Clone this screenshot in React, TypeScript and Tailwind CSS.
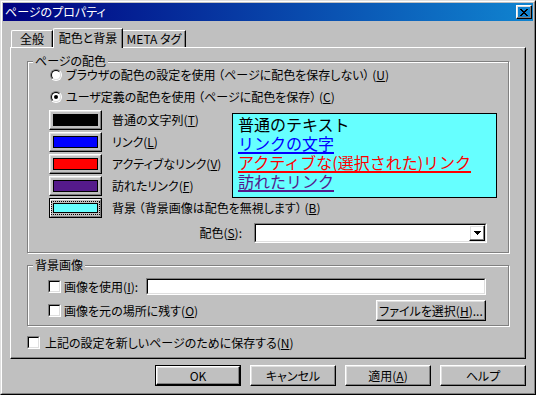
import React from "react";

const FONT = "font-['Noto_Sans_CJK_JP','Noto_Sans_CJK_SC',sans-serif] [font-feature-settings:'palt']";

function Radio({ checked }: { checked?: boolean }) {
  return (
    <div className="w-[12px] h-[12px] shrink-0 rounded-full border border-t-[#808080] border-l-[#808080] border-r-white border-b-white">
      <div className="w-full h-full rounded-full border border-t-black border-l-black border-r-[#dfdfdf] border-b-[#dfdfdf] bg-white flex items-center justify-center">
        {checked && <div className="w-[4px] h-[4px] rounded-full bg-black" />}
      </div>
    </div>
  );
}

function Check() {
  return (
    <div className="w-[13px] h-[13px] shrink-0 border border-t-[#808080] border-l-[#808080] border-r-white border-b-white">
      <div className="w-full h-full border border-t-black border-l-black border-r-[#dfdfdf] border-b-[#dfdfdf] bg-white" />
    </div>
  );
}

function Btn({
  children,
  className = "",
  def,
}: {
  children?: React.ReactNode;
  className?: string;
  def?: boolean;
}) {
  const inner = (
    <div className="h-full w-full border border-t-white border-l-white border-r-black border-b-black shadow-[inset_-1px_-1px_0_#808080,inset_1px_1px_0_#dfdfdf] flex items-center justify-center">
      {children}
    </div>
  );
  if (def) {
    return <div className={"border border-black shrink-0 " + className}>{inner}</div>;
  }
  return <div className={"shrink-0 " + className}>{inner}</div>;
}

function Swatch({ color }: { color: string }) {
  return (
    <Btn className="w-[53px] h-[20px]">
      <div className="w-[45px] h-[12px] border border-black" style={{ background: color }} />
    </Btn>
  );
}

function FocusSwatch({ color }: { color: string }) {
  return (
    <div className="w-[53px] h-[20px] shrink-0 border border-black">
      <div className="h-full w-full border border-t-white border-l-white border-r-[#808080] border-b-[#808080] flex items-center justify-center">
        <div className="border border-dotted border-black p-px">
          <div className="w-[45px] h-[10px] border border-black" style={{ background: color }} />
        </div>
      </div>
    </div>
  );
}

function Sunken({ className = "", children }: { className?: string; children?: React.ReactNode }) {
  return (
    <div
      className={
        "border border-t-[#808080] border-l-[#808080] border-r-white border-b-white bg-white " + className
      }
    >
      <div className="h-full w-full border border-t-black border-l-black border-r-[#dfdfdf] border-b-[#dfdfdf] flex items-center justify-end">
        {children}
      </div>
    </div>
  );
}

function GroupLabel({ children }: { children: React.ReactNode }) {
  return (
    <div className="-mt-[7px] ml-[5px] px-[2px] w-fit h-[12px] leading-[12px] bg-[#c0c0c0] whitespace-nowrap">
      {children}
    </div>
  );
}

function U({ children }: { children: React.ReactNode }) {
  return <span className="underline underline-offset-[1px]">{children}</span>;
}

export default function App() {
  return (
    <div
      className={`w-[536px] h-[395px] bg-[#c0c0c0] ${FONT} text-[12px] leading-[12px] text-black border border-t-[#dfdfdf] border-l-[#dfdfdf] border-r-black border-b-black overflow-hidden`}
    >
      <div className="h-full border border-t-white border-l-white border-r-[#808080] border-b-[#808080] p-px flex flex-col">
        {/* Title bar */}
        <div className="h-[18px] shrink-0 flex items-center bg-[linear-gradient(to_right,#000080,#1084d0)] pl-[2px] pr-[1px]">
          <span className="text-white flex-1 whitespace-nowrap">ページのプロパティ</span>
          <Btn className="w-[16px] h-[14px]">
            <svg width="8" height="7" viewBox="0 0 8 7" shapeRendering="crispEdges">
              <path
                d="M0 0h2v1H0zM6 0h2v1H6zM1 1h2v1H1zM5 1h2v1H5zM2 2h4v1H2zM3 3h2v1H3zM2 4h4v1H2zM1 5h2v1H1zM5 5h2v1H5zM0 6h2v1H0zM6 6h2v1H6z"
                fill="#000"
              />
            </svg>
          </Btn>
        </div>

        <div className="px-[7px] pt-[7px] flex flex-col">
          {/* Tabs */}
          <div className="h-[19px] flex items-end pl-[1px]">
            <div className="w-[42px] h-[17px] border-t border-l border-r border-t-white border-l-white border-r-black shadow-[inset_-1px_0_0_#808080] rounded-tl-[2px] flex items-center justify-center">
              全般
            </div>
            <div className="relative z-10 w-[70px] h-[20px] -mb-px bg-[#c0c0c0] border-t border-l border-r border-t-white border-l-white border-r-black shadow-[inset_-1px_0_0_#808080] rounded-tl-[2px] flex items-center justify-center pb-[2px] whitespace-nowrap">
              配色と背景
            </div>
            <div className="w-[63px] h-[17px] border-t border-r border-t-white border-r-black shadow-[inset_-1px_0_0_#808080] flex items-center justify-center whitespace-nowrap">
              META タグ
            </div>
          </div>

          {/* Panel */}
          <div className="h-[312px] border border-t-white border-l-white border-r-black border-b-black shadow-[inset_-1px_-1px_0_#808080] pt-[13px] pl-[16px] flex flex-col">
            {/* Group 1 */}
            <div className="w-[482px] h-[192px] shrink-0 border border-[#808080] shadow-[1px_1px_0_white,inset_1px_1px_0_white] pl-[21px] flex flex-col">
              <div className="-ml-[21px]">
                <GroupLabel>ページの配色</GroupLabel>
              </div>
              <div className="h-[16px] flex items-center ml-[1px] whitespace-nowrap">
                <Radio />
                <span className="ml-[4px]">
                  ブラウザの配色の設定を使用 （ページに配色を保存しない） (<U>U</U>)
                </span>
              </div>
              <div className="mt-[6px] h-[16px] flex items-center ml-[1px] whitespace-nowrap">
                <Radio checked />
                <span className="ml-[4px]">
                  ユーザ定義の配色を使用 （ページに配色を保存） (<U>C</U>)
                </span>
              </div>

              <div className="mt-[5px] flex">
                <div className="w-[183px] shrink-0 flex flex-col gap-[2px]">
                  <div className="h-[20px] flex items-center whitespace-nowrap">
                    <Swatch color="#000000" />
                    <span className="ml-[10px]">
                      普通の文字列(<U>T</U>)
                    </span>
                  </div>
                  <div className="h-[20px] flex items-center whitespace-nowrap">
                    <Swatch color="#0000ff" />
                    <span className="ml-[10px]">
                      リンク(<U>L</U>)
                    </span>
                  </div>
                  <div className="h-[20px] flex items-center whitespace-nowrap">
                    <Swatch color="#ff0000" />
                    <span className="ml-[10px]">
                      アクティブなリンク(<U>V</U>)
                    </span>
                  </div>
                  <div className="h-[20px] flex items-center whitespace-nowrap">
                    <Swatch color="#551a8b" />
                    <span className="ml-[10px]">
                      訪れたリンク(<U>F</U>)
                    </span>
                  </div>
                  <div className="h-[20px] flex items-center whitespace-nowrap">
                    <FocusSwatch color="#66ffff" />
                    <span className="ml-[10px]">
                      背景 （背景画像は配色を無視します） (<U>B</U>)
                    </span>
                  </div>
                </div>
                <div className="mt-[3px] w-[265px] h-[85px] shrink-0 border border-black bg-[#66ffff] pt-[2px] pl-[5px] text-[16px] leading-[16px] whitespace-nowrap [font-feature-settings:normal]">
                  <div className="h-[19px] text-black">普通のテキスト</div>
                  <div className="h-[19px]">
                    <span className="inline-block text-[#0000ff] border-b-2 border-[#0000ff] pb-px">リンクの文字</span>
                  </div>
                  <div className="h-[19px]">
                    <span className="inline-block text-[#ff0000] border-b-2 border-[#ff0000] pb-px">
                      アクティブな(選択された)リンク
                    </span>
                  </div>
                  <div className="h-[19px]">
                    <span className="inline-block text-[#551a8b] border-b-2 border-[#551a8b] pb-px">訪れたリンク</span>
                  </div>
                </div>
              </div>

              <div className="mt-[5px] h-[20px] flex items-center justify-end pr-[21px]">
                <span className="whitespace-nowrap">
                  配色(<U>S</U>):
                </span>
                <Sunken className="ml-[12px] w-[233px] h-[20px]">
                  <Btn className="w-[16px] h-[16px]">
                    <svg width="7" height="4" viewBox="0 0 7 4" shapeRendering="crispEdges">
                      <path d="M0 0h7v1H0zM1 1h5v1H1zM2 2h3v1H2zM3 3h1v1H3z" fill="#000" />
                    </svg>
                  </Btn>
                </Sunken>
              </div>
            </div>

            {/* Group 2 */}
            <div className="mt-[12px] w-[482px] h-[61px] shrink-0 border border-[#808080] shadow-[1px_1px_0_white,inset_1px_1px_0_white] pl-[20px] pr-[22px] flex flex-col">
              <div className="-ml-[20px]">
                <GroupLabel>背景画像</GroupLabel>
              </div>
              <div className="mt-[7px] h-[17px] flex items-center whitespace-nowrap">
                <Check />
                <span className="ml-[3px]">
                  画像を使用(<U>I</U>):
                </span>
                <Sunken className="ml-auto w-[340px] h-[17px]" />
              </div>
              <div className="mt-[5px] h-[21px] flex items-center whitespace-nowrap">
                <Check />
                <span className="ml-[3px]">
                  画像を元の場所に残す(<U>O</U>)
                </span>
                <Btn className="ml-auto w-[110px] h-[21px]">
                  <span>
                    ファイルを選択(<U>H</U>)...
                  </span>
                </Btn>
              </div>
            </div>

            <div className="mt-[10px] h-[13px] flex items-center whitespace-nowrap">
              <Check />
              <span className="ml-[5px]">
                上記の設定を新しいページのために保存する(<U>N</U>)
              </span>
            </div>
          </div>

          {/* Buttons */}
          <div className="mt-[6px] flex justify-end gap-[9px]">
            <Btn def className="w-[86px] h-[21px]">
              OK
            </Btn>
            <Btn className="w-[86px] h-[21px]">キャンセル</Btn>
            <Btn className="w-[86px] h-[21px]">
              <span>
                適用(<U>A</U>)
              </span>
            </Btn>
            <Btn className="w-[86px] h-[21px]">ヘルプ</Btn>
          </div>
        </div>
      </div>
    </div>
  );
}
